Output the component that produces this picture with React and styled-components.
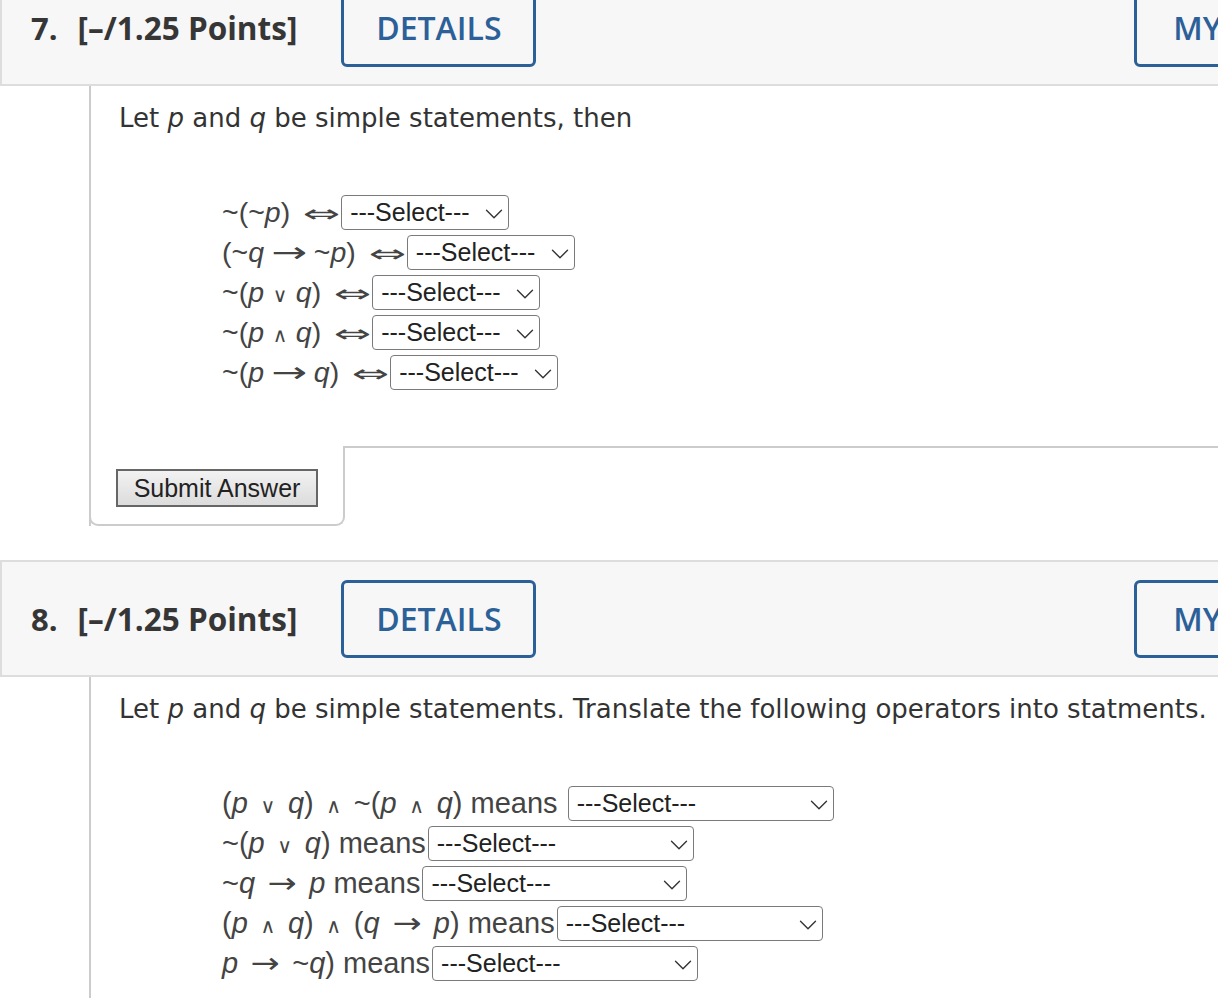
import React from 'react';
import styled, { createGlobalStyle } from 'styled-components';
import { ChevronDown } from 'lucide-react';

const GlobalStyle = createGlobalStyle`
  html, body {
    margin: 0;
    padding: 0;
    background: #fff;
    overflow: hidden;
  }
`;

// Styled components
const Page = styled.div`
  margin-top: -31px;
  width: 1400px;
`;

const Question = styled.section`
  margin-bottom: 34px;
`;

const Header = styled.header`
  display: flex;
  align-items: center;
  height: 113px;
  padding-left: 29px;
  background: #f7f7f7;
  border: 2px solid #dddddd;
  border-right: none;
  font-family: 'Open Sans', 'DejaVu Sans', sans-serif;
`;

const Number = styled.span`
  font-size: 31px;
  font-weight: 700;
  color: #363636;
  margin-right: 20px;
`;

const Points = styled.span`
  font-size: 31.5px;
  font-weight: 700;
  color: #363636;
  margin-right: 44px;
`;

const HeaderButton = styled.button`
  width: ${(p) => p.$width || 195}px;
  height: 78px;
  margin-left: ${(p) => p.$offset || 0}px;
  box-sizing: border-box;
  border: 3px solid #2c6098;
  border-radius: 6px;
  background: transparent;
  color: #2c6098;
  font-family: 'Open Sans', sans-serif;
  font-size: 32px;
  font-weight: 600;
  padding: 0;
  text-align: ${(p) => (p.$left ? 'left' : 'center')};
  padding-left: ${(p) => (p.$left ? 36 : 0)}px;
`;

const Body = styled.div`
  margin-left: 89px;
  border-left: 2px solid #cccccc;
  color: #333;
`;

const Prompt = styled.p`
  margin: 0;
  padding: 16px 0 0 28px;
  font-family: 'DejaVu Sans', Verdana, sans-serif;
  font-size: 26px;
  line-height: 32px;
  white-space: nowrap;
`;

const Var = styled.i`
  font-style: italic;
`;

// logic operator glyph, drawn in its own box so its width can follow the reference
const Op = styled.span`
  display: inline-block;
  width: ${(p) => p.$w}px;
  margin: 0 ${(p) => p.$mr || 0}px 0 ${(p) => p.$ml || 0}px;
  text-align: center;
  font-family: 'DejaVu Sans', sans-serif;
  font-size: ${(p) => p.$size}em;
  line-height: 1;
  transform: scaleX(${(p) => p.$sx || 1});
`;

const MathBlock = styled.div`
  display: flex;
  flex-direction: column;
  padding: ${(p) => p.$top}px 0 ${(p) => p.$bottom}px 131px;
  font-family: 'Liberation Sans', Arial, sans-serif;
  font-size: ${(p) => p.$size}px;
  color: #444;
`;

const MathRow = styled.div`
  display: flex;
  align-items: center;
  height: 40px;
`;

const Expr = styled.span`
  white-space: pre;
`;

const SelectWrap = styled.span`
  position: relative;
  display: inline-flex;
  margin-left: 2px;
`;

const Select = styled.select`
  appearance: none;
  width: ${(p) => p.$width}px;
  height: 35px;
  box-sizing: border-box;
  border: 1px solid #7a7a7a;
  border-radius: 4px;
  background: #fff;
  padding: 0 0 0 8px;
  font-family: 'Liberation Sans', Arial, sans-serif;
  font-size: 25px;
  color: #222;
`;

const Chevron = styled(ChevronDown)`
  position: absolute;
  right: 0;
  top: 4px;
  width: 30px;
  height: 30px;
  color: #333;
  pointer-events: none;
`;

const Footer = styled.div`
  display: flex;
  margin-left: -2px;
`;

const SubmitTab = styled.div`
  width: 256px;
  height: 80px;
  box-sizing: border-box;
  border: 2px solid #cccccc;
  border-top: none;
  border-radius: 0 0 9px 9px;
  padding: 23px 0 0 25px;
`;

const Filler = styled.div`
  flex: 1;
  border-top: 2px solid #cccccc;
`;

const SubmitButton = styled.button`
  width: 202px;
  height: 38px;
  box-sizing: border-box;
  border: 2px solid #666;
  background: linear-gradient(#f2f2f2, #dcdcdc);
  font-family: 'Liberation Sans', Arial, sans-serif;
  font-size: 25px;
  color: #222;
  padding: 0;
`;

const Dropdown = ({ width }) => (
  <SelectWrap>
    <Select $width={width} defaultValue="">
      <option value="">---Select---</option>
    </Select>
    <Chevron strokeWidth={1.1} />
  </SelectWrap>
);

const QuestionHeader = ({ number }) => (
  <Header>
    <Number>{number}.</Number>
    <Points>[–/1.25 Points]</Points>
    <HeaderButton>DETAILS</HeaderButton>
    <HeaderButton $offset={598} $width={260} $left>MY</HeaderButton>
  </Header>
);

const p = <Var>p</Var>;
const q = <Var>q</Var>;
const iff = <Op $w={33} $ml={15} $mr={1} $size={0.85} $sx={1.85}>⇔</Op>;
const longTo = <Op $w={34} $size={1} $sx={1.5}>→</Op>;
const or7 = <Op $w={16} $size={0.7}>∨</Op>;
const and7 = <Op $w={16} $size={0.7}>∧</Op>;
const to = <Op $w={38} $size={1} $sx={1.2}>→</Op>;
const or = <Op $w={24} $size={0.7}>∨</Op>;
const and = <Op $w={24} $size={0.7}>∧</Op>;

const equivalences = [
  <>~(~{p}){iff}</>,
  <>(~{q} {longTo} ~{p}){iff}</>,
  <>~({p} {or7} {q}){iff}</>,
  <>~({p} {and7} {q}){iff}</>,
  <>~({p} {longTo} {q}){iff}</>,
];

const translations = [
  [<>({p} {or} {q}) {and} ~({p} {and} {q}) means </>, 266],
  [<>~({p} {or} {q}) means</>, 266],
  [<>~{q} {to} {p} means</>, 265],
  [<>({p} {and} {q}) {and} ({q} {to} {p}) means</>, 266],
  [<>{p} {to} ~{q}) means</>, 266],
];

export default function App() {
  return (
    <Page>
      <GlobalStyle />
      <Question>
        <QuestionHeader number={7} />
        <Body>
          <Prompt>
            Let {p} and {q} be simple statements, then
          </Prompt>
          <MathBlock $size={28.5} $top={58} $bottom={54}>
            {equivalences.map((expr, i) => (
              <MathRow key={i}>
                <Expr>{expr}</Expr>
                <Dropdown width={168} />
              </MathRow>
            ))}
          </MathBlock>
          <Footer>
            <SubmitTab>
              <SubmitButton>Submit Answer</SubmitButton>
            </SubmitTab>
            <Filler />
          </Footer>
        </Body>
      </Question>
      <Question>
        <QuestionHeader number={8} />
        <Body>
          <Prompt>
            Let {p} and {q} be simple statements. Translate the following operators into statments.
          </Prompt>
          <MathBlock $size={29} $top={58} $bottom={40}>
            {translations.map(([expr, width], i) => (
              <MathRow key={i}>
                <Expr>{expr}</Expr>
                <Dropdown width={width} />
              </MathRow>
            ))}
          </MathBlock>
        </Body>
      </Question>
    </Page>
  );
}
